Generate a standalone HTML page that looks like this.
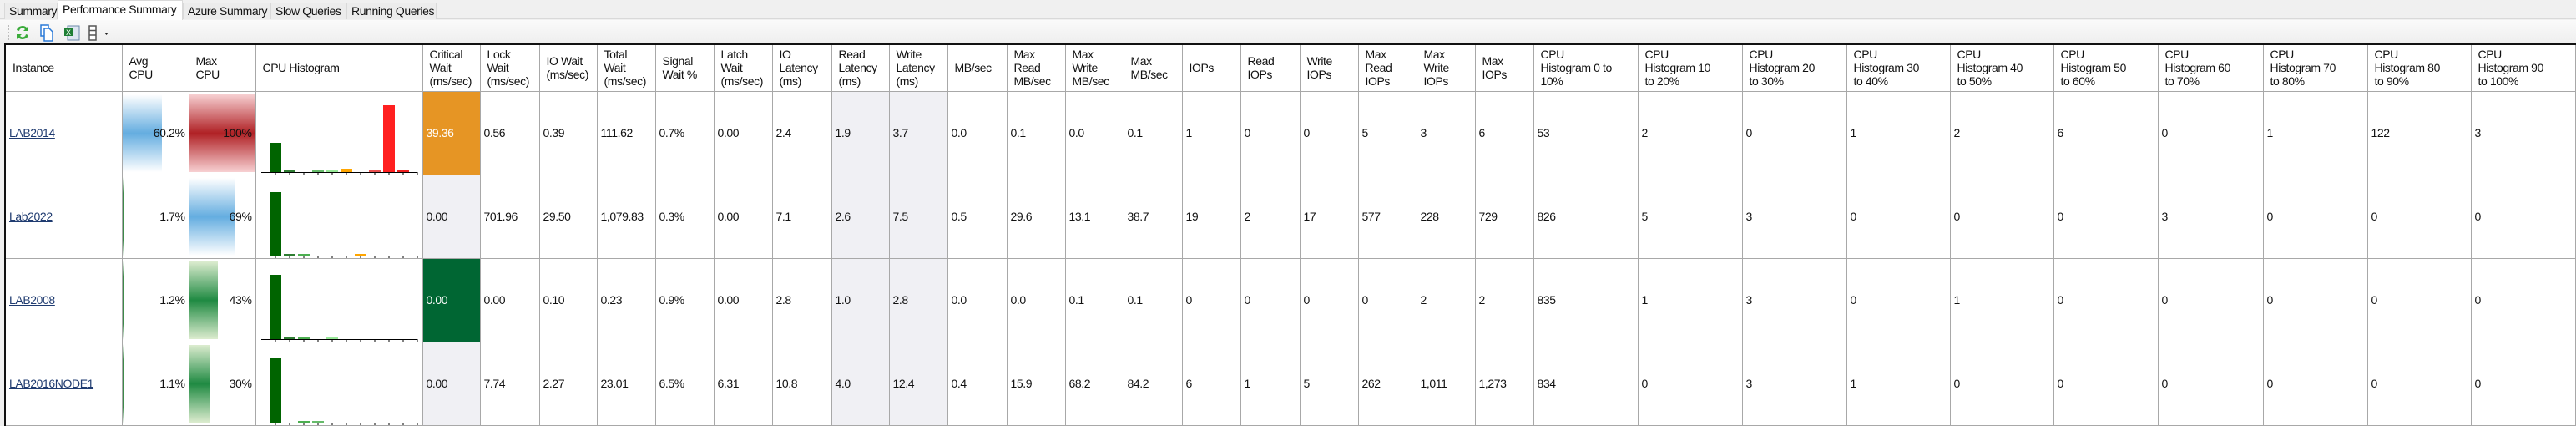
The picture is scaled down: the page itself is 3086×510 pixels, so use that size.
<!DOCTYPE html>
<html><head><meta charset="utf-8">
<style>
*{margin:0;padding:0;box-sizing:border-box}
html,body{width:3086px;height:509px;overflow:hidden;background:#f0f0f0;font-family:"Liberation Sans",Arial,sans-serif;font-size:14px;color:#111}
.tabs{position:absolute;left:0;top:0;width:3086px;height:23px;background:#f0f0f0;border-bottom:1px solid #d9d9d9}
.tab{position:absolute;top:3px;height:20px;line-height:19px;padding-left:5px;background:#ececec;border:1px solid #d9d9d9;border-bottom:none;letter-spacing:-0.4px;white-space:nowrap;overflow:visible}
.tab.act{top:0;height:24px;background:#fff;line-height:20px}
.tb{position:absolute;left:0;top:24px;width:3086px;height:29px;background:linear-gradient(#fafafa,#eeeeee)}
.grid{position:absolute;left:5px;top:52px;border-collapse:collapse;table-layout:fixed;background:#fff;border-top:2px solid #111;border-left:2px solid #111}
.grid td{border:1px solid #a8a8a8;padding:0 4px;vertical-align:middle;white-space:nowrap;overflow:hidden;letter-spacing:-0.4px;position:relative}
.grid tr.h td{height:56px;line-height:16px;padding-left:8px;border-top:none}
.grid tr.d td{height:100px}
.g{background:#f0f0f4}
a{color:#1f3b70;text-decoration:underline}
.bar{position:absolute;top:3px;bottom:3px;left:0}
.blue{background:linear-gradient(#ffffff,#64ade0 50%,#ffffff)}
.red{background:linear-gradient(#f7d0d2,#b02125 50%,#f7d0d2)}
.green{background:linear-gradient(#dceccf,#1f8a42 50%,#dceccf)}
.line{position:absolute;top:2px;bottom:2px;left:0;width:2px;background:linear-gradient(#fff,#3c8a4a 20%,#3c8a4a 80%,#fff)}
.r{text-align:right}
.t{position:relative}
.hs{position:absolute;left:0;top:0}
</style></head><body>
<div class="tabs">
<div class="tab" style="left:5px;width:64px">Summary</div>
<div class="tab act" style="left:69px;width:150px">Performance Summary</div>
<div class="tab" style="left:219px;width:105px">Azure Summary</div>
<div class="tab" style="left:324px;width:91px">Slow Queries</div>
<div class="tab" style="left:415px;width:108px">Running Queries</div>
</div>
<div class="tb">
<svg width="160" height="29" style="position:absolute;left:0;top:0">
<g fill="#bbb"><rect x="10" y="6" width="1" height="2"/><rect x="10" y="10" width="1" height="2"/><rect x="10" y="14" width="1" height="2"/><rect x="10" y="18" width="1" height="2"/><rect x="10" y="22" width="1" height="2"/></g>
<path d="M20 12a7 6 0 0 1 12-3l2-2v6h-6l2-2a4 4 0 0 0-7 2z" fill="#3aab3a"/>
<path d="M34 18a7 6 0 0 1-12 3l-2 2v-6h6l-2 2a4 4 0 0 0 7-2z" fill="#3aab3a"/>
<rect x="49" y="6" width="9" height="13" fill="#fff" stroke="#2a7ad8" stroke-width="1.5"/>
<path d="M53 10h6l4 4v11h-10z" fill="#fff" stroke="#2a7ad8" stroke-width="1.5"/>
<rect x="81" y="7" width="14" height="17" fill="#dde6f0" stroke="#6a88aa"/>
<rect x="77" y="9" width="10" height="10" fill="#1e7e34"/>
<text x="79" y="18" font-size="9" fill="#fff" font-family="Liberation Sans">X</text>
<rect x="107" y="7" width="8" height="17" fill="#fff" stroke="#555" stroke-width="1.5"/>
<path d="M107 12.5h8M107 18h8" stroke="#555" stroke-width="1.5"/>
<path d="M125 15h5l-2.5 3z" fill="#222"/>
</svg>
</div>
<table class="grid">
<colgroup>
<col style="width:140px"><col style="width:80px"><col style="width:80px"><col style="width:200px"><col style="width:69px"><col style="width:71px"><col style="width:69px"><col style="width:70px"><col style="width:70px"><col style="width:70px"><col style="width:71px"><col style="width:69px"><col style="width:70px"><col style="width:71px"><col style="width:70px"><col style="width:70px"><col style="width:70px"><col style="width:70px"><col style="width:71px"><col style="width:70px"><col style="width:70px"><col style="width:70px"><col style="width:70px"><col style="width:125px"><col style="width:125px"><col style="width:125px"><col style="width:124px"><col style="width:124px"><col style="width:125px"><col style="width:126px"><col style="width:125px"><col style="width:124px"><col style="width:125px">
</colgroup>
<tr class="h"><td>Instance</td><td>Avg<br>CPU</td><td>Max<br>CPU</td><td>CPU Histogram</td><td>Critical<br>Wait<br>(ms/sec)</td><td>Lock<br>Wait<br>(ms/sec)</td><td>IO Wait<br>(ms/sec)</td><td>Total<br>Wait<br>(ms/sec)</td><td>Signal<br>Wait %</td><td>Latch<br>Wait<br>(ms/sec)</td><td>IO<br>Latency<br>(ms)</td><td>Read<br>Latency<br>(ms)</td><td>Write<br>Latency<br>(ms)</td><td>MB/sec</td><td>Max<br>Read<br>MB/sec</td><td>Max<br>Write<br>MB/sec</td><td>Max<br>MB/sec</td><td>IOPs</td><td>Read<br>IOPs</td><td>Write<br>IOPs</td><td>Max<br>Read<br>IOPs</td><td>Max<br>Write<br>IOPs</td><td>Max<br>IOPs</td><td>CPU<br>Histogram 0 to<br>10%</td><td>CPU<br>Histogram 10<br>to 20%</td><td>CPU<br>Histogram 20<br>to 30%</td><td>CPU<br>Histogram 30<br>to 40%</td><td>CPU<br>Histogram 40<br>to 50%</td><td>CPU<br>Histogram 50<br>to 60%</td><td>CPU<br>Histogram 60<br>to 70%</td><td>CPU<br>Histogram 70<br>to 80%</td><td>CPU<br>Histogram 80<br>to 90%</td><td>CPU<br>Histogram 90<br>to 100%</td></tr>

<tr class="d"><td><a>LAB2014</a></td>
<td class="r"><div class="bar blue" style="width:47px"></div><span class="t">60.2%</span></td>
<td class="r"><div class="bar red" style="width:79px"></div><span class="t">100%</span></td>
<td><svg class="hs" width="200" height="100"><rect x="16" y="61" width="14" height="35" fill="#006400"/><rect x="33" y="94" width="14" height="2" fill="#2e7d32"/><rect x="67" y="94" width="14" height="2" fill="#66bb6a"/><rect x="84" y="94" width="14" height="2" fill="#98e898"/><rect x="101" y="92" width="14" height="4" fill="#ffa500"/><rect x="135" y="94" width="14" height="2" fill="#e85050"/><rect x="152" y="16" width="14" height="80" fill="#ff2020"/><rect x="169" y="94" width="14" height="2" fill="#ee2020"/><path d="M6 96.5H193M23 96v3M40 96v3M57 96v3M74 96v3M91 96v3M108 96v3M125 96v3M142 96v3M159 96v3M176 96v3M193 96v3" stroke="#000" stroke-width="1"/></svg></td>
<td style="background:#e69524;color:#fff">39.36</td><td>0.56</td><td>0.39</td><td>111.62</td><td>0.7%</td><td>0.00</td><td>2.4</td><td class="g">1.9</td><td class="g">3.7</td><td>0.0</td><td>0.1</td><td>0.0</td><td>0.1</td><td>1</td><td>0</td><td>0</td><td>5</td><td>3</td><td>6</td><td>53</td><td>2</td><td>0</td><td>1</td><td>2</td><td>6</td><td>0</td><td>1</td><td>122</td><td>3</td></tr>

<tr class="d"><td><a>Lab2022</a></td>
<td class="r"><div class="line"></div>1.7%</td>
<td class="r"><div class="bar blue" style="width:54px"></div><span class="t">69%</span></td>
<td><svg class="hs" width="200" height="100"><rect x="16" y="20" width="14" height="76" fill="#006400"/><rect x="33" y="94" width="14" height="2" fill="#2e7d32"/><rect x="50" y="94" width="14" height="2" fill="#4caf50"/><rect x="118" y="94" width="14" height="2" fill="#ffa500"/><path d="M6 96.5H193M23 96v3M40 96v3M57 96v3M74 96v3M91 96v3M108 96v3M125 96v3M142 96v3M159 96v3M176 96v3M193 96v3" stroke="#000" stroke-width="1"/></svg></td>
<td class="g">0.00</td><td>701.96</td><td>29.50</td><td>1,079.83</td><td>0.3%</td><td>0.00</td><td>7.1</td><td class="g">2.6</td><td class="g">7.5</td><td>0.5</td><td>29.6</td><td>13.1</td><td>38.7</td><td>19</td><td>2</td><td>17</td><td>577</td><td>228</td><td>729</td><td>826</td><td>5</td><td>3</td><td>0</td><td>0</td><td>0</td><td>3</td><td>0</td><td>0</td><td>0</td></tr>

<tr class="d"><td><a>LAB2008</a></td>
<td class="r"><div class="line"></div>1.2%</td>
<td class="r"><div class="bar green" style="width:34px"></div><span class="t">43%</span></td>
<td><svg class="hs" width="200" height="100"><rect x="16" y="19" width="14" height="77" fill="#006400"/><rect x="33" y="94" width="14" height="2" fill="#2e7d32"/><rect x="50" y="94" width="14" height="2" fill="#4caf50"/><rect x="84" y="94" width="14" height="2" fill="#98e898"/><path d="M6 96.5H193M23 96v3M40 96v3M57 96v3M74 96v3M91 96v3M108 96v3M125 96v3M142 96v3M159 96v3M176 96v3M193 96v3" stroke="#000" stroke-width="1"/></svg></td>
<td style="background:#006633;color:#fff">0.00</td><td>0.00</td><td>0.10</td><td>0.23</td><td>0.9%</td><td>0.00</td><td>2.8</td><td class="g">1.0</td><td class="g">2.8</td><td>0.0</td><td>0.0</td><td>0.1</td><td>0.1</td><td>0</td><td>0</td><td>0</td><td>0</td><td>2</td><td>2</td><td>835</td><td>1</td><td>3</td><td>0</td><td>1</td><td>0</td><td>0</td><td>0</td><td>0</td><td>0</td></tr>

<tr class="d"><td><a>LAB2016NODE1</a></td>
<td class="r"><div class="line"></div>1.1%</td>
<td class="r"><div class="bar green" style="width:24px"></div><span class="t">30%</span></td>
<td><svg class="hs" width="200" height="100"><rect x="16" y="19" width="14" height="77" fill="#006400"/><rect x="50" y="94" width="14" height="2" fill="#4caf50"/><rect x="67" y="94" width="14" height="2" fill="#66bb6a"/><path d="M6 96.5H193M23 96v3M40 96v3M57 96v3M74 96v3M91 96v3M108 96v3M125 96v3M142 96v3M159 96v3M176 96v3M193 96v3" stroke="#000" stroke-width="1"/></svg></td>
<td class="g">0.00</td><td>7.74</td><td>2.27</td><td>23.01</td><td>6.5%</td><td>6.31</td><td>10.8</td><td class="g">4.0</td><td class="g">12.4</td><td>0.4</td><td>15.9</td><td>68.2</td><td>84.2</td><td>6</td><td>1</td><td>5</td><td>262</td><td>1,011</td><td>1,273</td><td>834</td><td>0</td><td>3</td><td>1</td><td>0</td><td>0</td><td>0</td><td>0</td><td>0</td><td>0</td></tr>
</table>
</body></html>
